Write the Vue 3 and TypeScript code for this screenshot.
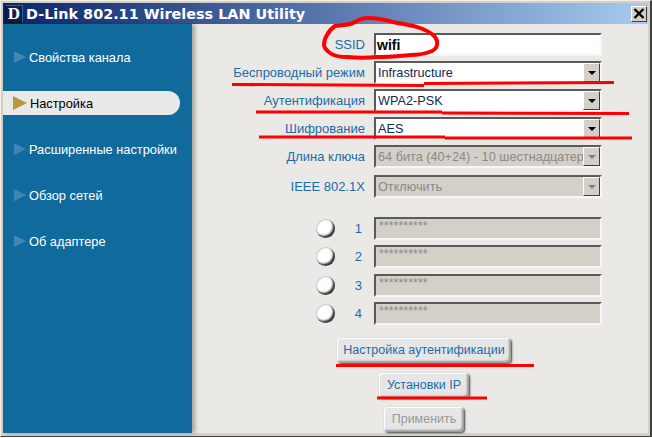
<template>
  <div class="window">
    <div class="titlebar">
      <span class="logo">D</span>
      <span class="title">D-Link 802.11 Wireless LAN Utility</span>
      <button class="close">
        <svg width="12" height="11" viewBox="0 0 12 11"><path d="M1.5 1 10.5 10M10.5 1 1.5 10" stroke="#000" stroke-width="2.4" fill="none" /></svg>
      </button>
    </div>
    <div class="body">
      <nav class="sidebar">
        <div v-for="item in menu" :key="item" :class="['menu-item', { active: item === current }]">
          <svg class="arrow" viewBox="0 0 16 16"><path d="M1 1 15 8 1 15Z" /></svg>
          <span>{{ item }}</span>
        </div>
      </nav>
      <main class="content">
        <div class="form">
          <label>SSID</label>
          <div class="field ssid">wifi</div>
          <template v-for="row in selects" :key="row.label">
            <label>{{ row.label }}</label>
            <div :class="['field', { disabled: row.disabled }]">
              <span class="value">{{ row.value }}</span>
              <span class="drop"><i></i></span>
            </div>
          </template>
        </div>
        <div class="keys">
          <div v-for="n in 4" :key="n" class="key-row">
            <span class="radio"></span>
            <span class="num">{{ n }}</span>
            <div class="field disabled stars">**********</div>
          </div>
        </div>
        <div class="buttons">
          <button class="btn wide">Настройка аутентификации</button>
          <button class="btn ip">Установки IP</button>
          <button class="btn apply" disabled>Применить</button>
        </div>
      </main>
    </div>
    <svg class="marks" width="652" height="438" viewBox="0 0 652 438">
      <path d="M335 26C342 25 350 25 353 23C358 20 362 18 368 18C378 18 386 20 393 22C403 24 412 25 420 28C428 31 436 35 437 41C438 46 436 49 432 51C425 54 418 55 410 55C398 56 388 57 377 57C367 58 357 58 347 57C340 57 334 56 330 53C326 50 324 48 324 45C324 41 325 38 327 35C329 31 332 28 335 26Z" stroke-width="4" />
      <path d="M232 84.5 424 85.5" stroke-width="3" />
      <path d="M424 83.5 614 82.5" stroke-width="3" />
      <path d="M256 112 442 112" stroke-width="3" />
      <path d="M442 113 629 113.5" stroke-width="3" />
      <path d="M259 137 445 137" stroke-width="3" />
      <path d="M445 138 632 138" stroke-width="3" />
      <path d="M336 365.5 534 365.5" stroke-width="3" />
      <path d="M377 398 487 398" stroke-width="3" />
    </svg>
  </div>
</template>

<script setup lang="ts">
const menu = ['Свойства канала', 'Настройка', 'Расширенные настройки', 'Обзор сетей', 'Об адаптере']
const current = 'Настройка'

const selects = [
  { label: 'Беспроводный режим', value: 'Infrastructure', disabled: false },
  { label: 'Аутентификация', value: 'WPA2-PSK', disabled: false },
  { label: 'Шифрование', value: 'AES', disabled: false },
  { label: 'Длина ключа', value: '64 бита (40+24) - 10 шестнадцатеричных', disabled: true },
  { label: 'IEEE 802.1X', value: 'Отключить', disabled: true }
]
</script>

<style>
html,
body {
  margin: 0;
  background: #fff;
}
</style>

<style scoped>
.window {
  position: relative;
  width: 652px;
  height: 437px;
  box-sizing: border-box;
  padding: 2px 2px 3px 2px;
  background: #d4d0c8;
  border-top: 1px solid #f2f0e8;
  border-left: 1px solid #f2f0e8;
  border-bottom: 1px solid #404040;
  border-right: 2px solid #404040;
  overflow: hidden;
  font-family: "Liberation Sans", Arial, sans-serif;
  font-size: 13px;
  display: flex;
  flex-direction: column;
}

.titlebar {
  height: 21px;
  flex: none;
  display: flex;
  align-items: center;
  padding: 0 1px 0 2px;
  background: linear-gradient(to right, #0a246a, #a6caf0);
  color: #fff;
}

.logo {
  width: 18px;
  height: 18px;
  background: #0a2050;
  border: 1px solid #111;
  border-top-color: #1f6a9a;
  border-right-color: #1f6a9a;
  box-sizing: border-box;
  color: #fff;
  font: bold 17px/16px "Liberation Serif", serif;
  text-align: center;
  flex: none;
}

.title {
  margin-left: 3px;
  font: bold 14.4px "DejaVu Sans", sans-serif;
  flex: 1;
  white-space: nowrap;
}

.close {
  width: 16px;
  height: 16px;
  padding: 0;
  display: flex;
  align-items: center;
  justify-content: center;
  background: #d4d0c8;
  border: 1px solid;
  border-color: #fff #404040 #404040 #fff;
}

.body {
  flex: 1;
  display: flex;
  min-height: 0;
}

.sidebar {
  width: 189px;
  flex: none;
  background: #116a9c;
  padding-top: 21px;
  display: flex;
  flex-direction: column;
  gap: 22px;
  box-shadow: 3px 0 4px rgba(0, 0, 0, 0.3);
  z-index: 1;
  font-size: 12.8px;
}

.menu-item {
  height: 24px;
  width: 177px;
  display: flex;
  align-items: center;
  gap: 2px;
  padding-left: 10px;
  box-sizing: border-box;
  color: #fff;
  border-radius: 0 12px 12px 0;
}

.menu-item.active {
  background: #e9e9e9;
  color: #000;
  padding-left: 9px;
}

.arrow {
  width: 14px;
  height: 14px;
  fill: #3f86b4;
  flex: none;
}

.active .arrow {
  fill: #b59a45;
  width: 16px;
  height: 16px;
}

.content {
  flex: 1;
  background: #ebe9e6;
  display: flex;
  flex-direction: column;
  padding-top: 9px;
}

.form {
  display: grid;
  grid-template-columns: 173px 228px;
  column-gap: 9px;
  row-gap: 5px;
  align-items: center;
  justify-content: start;
}

.form > :nth-last-child(-n + 2) {
  margin-top: 2px;
}

label {
  color: #1b6ca8;
  text-align: right;
  white-space: nowrap;
}

.field {
  box-sizing: border-box;
  height: 23px;
  display: flex;
  align-items: center;
  padding-left: 2px;
  background: #fff;
  border: 2px solid;
  border-color: #5a5a5a #f6f6f6 #f6f6f6 #5a5a5a;
  overflow: hidden;
  color: #102a50;
  font-size: 12.7px;
  white-space: nowrap;
}

.ssid {
  font-weight: bold;
  font-size: 14px;
  color: #000;
  padding-left: 1px;
}

.value {
  flex: 1;
  overflow: hidden;
}

.disabled {
  background: #d4d0c8;
  color: #8a8a8a;
}

.drop {
  width: 17px;
  height: 19px;
  flex: none;
  background: #d4d0c8;
  border: 1px solid;
  border-color: #fff #404040 #404040 #fff;
  box-sizing: border-box;
  display: flex;
  align-items: center;
  justify-content: center;
}

.drop i {
  border: 4px solid transparent;
  border-top: 4px solid #000;
  border-bottom: 0;
}

.disabled .drop i {
  border-top-color: #808080;
}

.keys {
  margin-top: 19px;
  display: flex;
  flex-direction: column;
  gap: 5.3px;
}

.key-row {
  display: flex;
  align-items: center;
  height: 23px;
  padding-left: 124px;
}

.radio {
  width: 19px;
  height: 19px;
  border-radius: 50%;
  background: radial-gradient(circle at 42% 40%, #fff 45%, #e2e2e2 70%, #aaa 100%);
  box-shadow: inset -2px -2px 2px #333, inset 1px 1px 1px #ccc;
  flex: none;
}

.num {
  width: 39px;
  text-align: right;
  padding-right: 12px;
  box-sizing: border-box;
  color: #1b6ca8;
}

.stars {
  width: 228px;
  align-items: flex-start;
  color: #8a8a8a;
  font-size: 12.5px;
  padding-left: 3px;
}

.buttons {
  margin-top: 13px;
  display: flex;
  flex-direction: column;
  align-items: center;
  gap: 9px;
  padding-left: 8px;
}

.btn {
  font: 12.5px "Liberation Sans", Arial, sans-serif;
  color: #1b6ca8;
  background: #e6e6e6;
  border: none;
  border-radius: 4px;
  box-shadow: inset 1px 1px 0 #fff, inset -2px -2px 2px #999, 1px 1px 2px #444;
  padding: 0;
  height: 25px;
}

.wide { width: 174px; }
.ip { width: 90px; margin-top: 1px; }
.apply { width: 80px; color: #999; }

.marks {
  position: absolute;
  left: -1px;
  top: -1px;
  pointer-events: none;
  z-index: 2;
}

.marks path {
  stroke: #f00;
  fill: none;
}
</style>
